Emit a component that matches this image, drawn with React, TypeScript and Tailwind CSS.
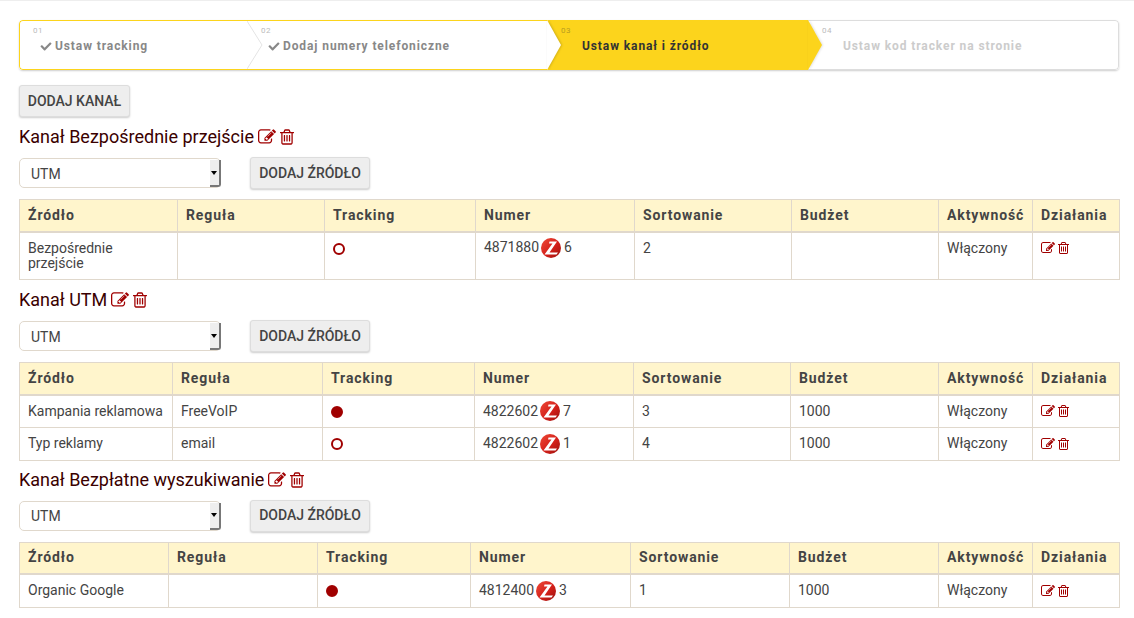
import React from 'react';
import { FaCheck } from 'react-icons/fa';

type Row = {
    source: React.ReactNode;
    rule: string;
    active: boolean;
    prefix: string;
    suffix: string;
    sort: string;
    budget: string;
};

type Channel = {
    name: string;
    widths: number[];
    rows: Row[];
};

const channels: Channel[] = [
    {
        name: 'Bezpośrednie przejście',
        widths: [158, 147, 151, 159, 157, 147, 94, 87],
        rows: [
            { source: <>Bezpośrednie<br />przejście</>, rule: '', active: false, prefix: '4871880', suffix: '6', sort: '2', budget: '' },
        ],
    },
    {
        name: 'UTM',
        widths: [153, 150, 152, 159, 157, 148, 94, 87],
        rows: [
            { source: 'Kampania reklamowa', rule: 'FreeVoIP', active: true, prefix: '4822602', suffix: '7', sort: '3', budget: '1000' },
            { source: 'Typ reklamy', rule: 'email', active: false, prefix: '4822602', suffix: '1', sort: '4', budget: '1000' },
        ],
    },
    {
        name: 'Bezpłatne wyszukiwanie',
        widths: [149, 149, 153, 160, 159, 149, 94, 87],
        rows: [
            { source: 'Organic Google', rule: '', active: true, prefix: '4812400', suffix: '3', sort: '1', budget: '1000' },
        ],
    },
];

const headers = ['Źródło', 'Reguła', 'Tracking', 'Numer', 'Sortowanie', 'Budżet', 'Aktywność', 'Działania'];

const cell = 'px-[8px] py-[8px] leading-[15.4px] align-top border border-[#e0d8cc]';

const ZLogo = () => (
    <svg viewBox="0 0 20 20" className="w-[20px] h-[20px] shrink-0 ml-[2px] mr-[3px] -my-[3px]">
        <defs>
            <linearGradient id="zball" x1="0" y1="0" x2="1" y2="1">
                <stop offset="0" stopColor="#ee4a38" />
                <stop offset="0.55" stopColor="#d4201a" />
                <stop offset="1" stopColor="#98120e" />
            </linearGradient>
        </defs>
        <circle cx="10" cy="10" r="10" fill="url(#zball)" />
        <path d="M8.5 3.5 H16 L8.5 14.5 H17 L15.5 16.5 H3.5 L11.5 5.5 H8 Z" fill="#fff" />
    </svg>
);

const EditIcon = ({ className }: { className: string }) => (
    <svg viewBox="0 0 1792 1792" fill="currentColor" className={className}>
        <path d="M888 1184l116-116-152-152-116 116v56h96v96h56zm440-720q-16-16-33 1l-350 350q-17 17-1 33t33-1l350-350q17-17 1-33zm80 594v190q0 119-84.5 203.5t-203.5 84.5h-832q-119 0-203.5-84.5t-84.5-203.5v-832q0-119 84.5-203.5t203.5-84.5h832q63 0 117 25 15 7 18 23 3 17-9 29l-49 49q-14 14-32 8-23-6-45-6h-832q-66 0-113 47t-47 113v832q0 66 47 113t113 47h832q66 0 113-47t47-113v-126q0-13 9-22l64-64q15-15 35-7t20 29zm-96-738l288 288-672 672h-288v-288zm444 132l-92 92-288-288 92-92q28-28 68-28t68 28l152 152q28 28 28 68t-28 68z" />
    </svg>
);

const TrashIcon = ({ className }: { className: string }) => (
    <svg viewBox="192 0 1408 1792" fill="currentColor" className={className}>
        <path d="M704 736v576q0 14-9 23t-23 9h-64q-14 0-23-9t-9-23v-576q0-14 9-23t23-9h64q14 0 23 9t9 23zm256 0v576q0 14-9 23t-23 9h-64q-14 0-23-9t-9-23v-576q0-14 9-23t23-9h64q14 0 23 9t9 23zm256 0v576q0 14-9 23t-23 9h-64q-14 0-23-9t-9-23v-576q0-14 9-23t23-9h64q14 0 23 9t9 23zm128 724v-948h-896v948q0 22 7 40.5t14.5 27 10.5 8.5h832q3 0 10.5-8.5t14.5-27 7-40.5zm-672-1076h448l-48-117q-7-9-17-11h-317q-10 2-17 11zm928 32v64q0 14-9 23t-23 9h-96v948q0 83-47 143.5t-113 60.5h-832q-66 0-113-58.5t-47-141.5v-952h-96q-14 0-23-9t-9-23v-64q0-14 9-23t23-9h309l70-167q15-37 54-63t79-26h320q40 0 79 26t54 63l70 167h309q14 0 23 9t9 23z" />
    </svg>
);

const Step = ({ no, label, done, width, tone }: { no: string; label: string; done?: boolean; width: string; tone: 'done' | 'active' | 'todo' }) => {
    const isActive = tone === 'active';
    const isTodo = tone === 'todo';
    return (
        <div className={`relative h-[50px] ${width} ${isActive ? 'bg-[#fcd41c]' : 'bg-white'}`}>
            <div className={`text-[8px] leading-none tracking-[0.5px] ml-[14px] mt-[7px] ${isActive ? 'text-[#b89c20]' : 'text-[#bbb]'}`}>{no}</div>
            <div className={`flex items-center gap-[3px] text-[12px] font-bold tracking-[0.9px] leading-[14px] mt-[4px] ${done ? 'ml-[21px]' : 'ml-[35px]'} ${isActive ? 'text-[#333]' : isTodo ? 'text-[#ccc]' : 'text-[#888]'}`}>
                {done && <FaCheck className="w-[12px] h-[11px]" />}
                {label}
            </div>
        </div>
    );
};

const Tools = ({ size }: { size: 'lg' | 'sm' }) => (
    <span className={`flex items-center text-[#a00000] ${size === 'lg' ? 'gap-[4px]' : 'gap-[3px] h-[15px]'}`}>
        <EditIcon className={size === 'lg' ? 'w-[18px] h-[18px]' : 'w-[14px] h-[14px]'} />
        <TrashIcon className={size === 'lg' ? 'w-[14px] h-[18px]' : 'w-[11px] h-[14px]'} />
    </span>
);

const ChannelBlock = ({ channel }: { channel: Channel }) => (
    <section className="mb-[7px] first-of-type:mb-[8px]">
        <h3 className="flex items-center gap-[4px] h-[24px] text-[18px] font-normal leading-[24px] text-[#3a0000]">
            Kanał {channel.name} <Tools size="lg" />
        </h3>
        <div className="flex items-center mt-[8px] h-[32px]">
            <div className="relative w-[202px] h-[30px]">
                <select defaultValue="UTM" className="w-full h-full pl-[11px] pt-[2px] text-[14px] text-[#444] bg-white border border-[#e0d8cc] rounded-[5px] appearance-none">
                    <option>UTM</option>
                </select>
                {/* native-looking arrow strip over the select */}
                <div className="absolute right-0 top-[2px] bottom-[1px] w-[11px] flex items-center justify-center pr-[2px] bg-[#eeeeee] border-r-2 border-b-2 border-[#777] rounded-br-[3px] pointer-events-none">
                    <div className="w-0 h-0 border-x-[3px] border-x-transparent border-t-[4px] border-t-black" />
                </div>
            </div>
            <button className="ml-[29px] w-[120px] h-[32px] text-[14px] font-medium text-[#444] bg-[#eeeeee] border border-[#ddd] rounded-[3px] shadow-[0_1px_2px_rgba(0,0,0,0.2)]">
                DODAJ ŹRÓDŁO
            </button>
        </div>
        <table className="mt-[10px] w-[1100px] table-fixed border-collapse text-[14px] text-[#444]">
            <colgroup>
                {channel.widths.map((w, i) => (
                    <col key={i} style={{ width: w }} />
                ))}
            </colgroup>
            <thead>
                <tr className="bg-[#fff5cc]">
                    {headers.map((h) => (
                        <th key={h} className="h-[32px] px-[8px] text-left font-bold tracking-[0.9px] whitespace-nowrap border border-[#e0d8cc] border-b-2">
                            {h}
                        </th>
                    ))}
                </tr>
            </thead>
            <tbody>
                {channel.rows.map((row, i) => (
                    <tr key={i}>
                        <td className={`${cell} whitespace-nowrap`}>{row.source}</td>
                        <td className={cell}>{row.rule}</td>
                        <td className={cell}>
                            <span className={`block w-[12px] h-[12px] mt-[2px] rounded-full border-2 border-[#a00000] ${row.active ? 'bg-[#a00000]' : 'bg-white'}`} />
                        </td>
                        <td className={cell}>
                            <span className="flex items-center h-[15px]">{row.prefix}<ZLogo />{row.suffix}</span>
                        </td>
                        <td className={cell}>{row.sort}</td>
                        <td className={cell}>{row.budget}</td>
                        <td className={cell}>Włączony</td>
                        <td className={cell}><Tools size="sm" /></td>
                    </tr>
                ))}
            </tbody>
        </table>
    </section>
);

export default function App() {
    return (
        <div className="w-[1134px] h-[618px] overflow-hidden bg-white border-t border-[#eee] px-[19px] pt-[19px] font-['Roboto',sans-serif]">
            {/* Wizard */}
            <div className="relative flex w-[1100px] h-[50px] rounded-[4px] overflow-hidden shadow-[0_1px_2px_rgba(0,0,0,0.2)]">
                <Step no="01" label="Ustaw tracking" done width="w-[228px]" tone="done" />
                <Step no="02" label="Dodaj numery telefoniczne" done width="w-[300px]" tone="done" />
                <Step no="03" label="Ustaw kanał i źródło" width="w-[261px]" tone="active" />
                <Step no="04" label="Ustaw kod tracker na stronie" width="w-[311px]" tone="todo" />
                {/* borders and arrows lie over the steps */}
                <div className="absolute left-0 top-0 w-[528px] h-[50px] border border-r-0 border-[#fcd41c] rounded-l-[4px]" />
                <div className="absolute left-[789px] top-0 w-[311px] h-[50px] border border-l-0 border-[#ddd] rounded-r-[4px]" />
                <svg className="absolute left-[228px] top-0 w-[18px] h-[50px]" viewBox="0 0 18 50">
                    <path d="M0 1 L15 25 L0 49" fill="#fff" stroke="#e4e4e4" strokeWidth="1" />
                </svg>
                <svg className="absolute left-[528px] top-0 w-[18px] h-[50px] drop-shadow-[1px_0_1px_rgba(0,0,0,0.18)]" viewBox="0 0 18 50">
                    <path d="M0 0 L14 25 L0 50 Z" fill="#fff" />
                </svg>
                <svg className="absolute left-[789px] top-0 w-[18px] h-[50px] drop-shadow-[1px_0_1px_rgba(0,0,0,0.12)]" viewBox="0 0 18 50">
                    <path d="M0 0 L14 25 L0 50 Z" fill="#fcd41c" />
                </svg>
            </div>

            <button className="mt-[15px] mb-[8px] block w-[111px] h-[32px] text-[14px] font-medium text-[#444] bg-[#eeeeee] border border-[#ddd] rounded-[3px] shadow-[0_1px_2px_rgba(0,0,0,0.2)]">
                DODAJ KANAŁ
            </button>

            {channels.map((c) => (
                <ChannelBlock key={c.name} channel={c} />
            ))}
        </div>
    );
}
